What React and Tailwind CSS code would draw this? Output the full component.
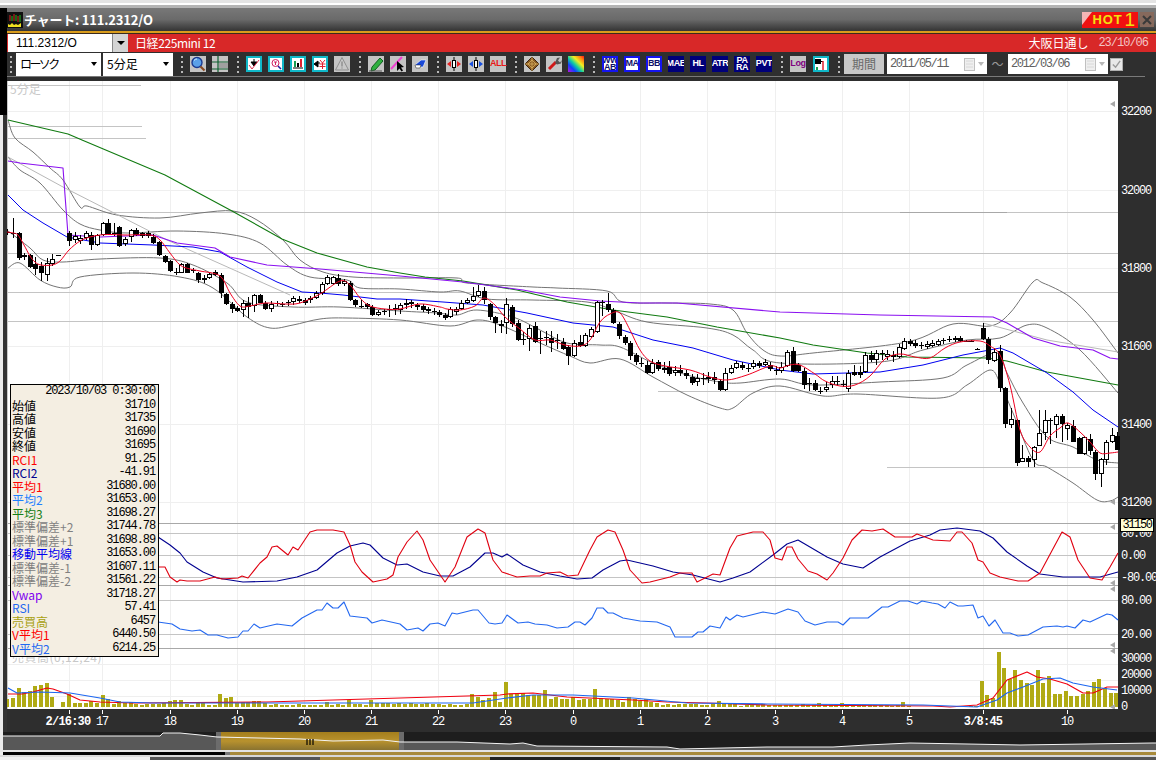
import React from "react";

const pts = (a) => a.map((p) => p.join(",")).join(" ");

const smooth = (a) => {
  let d = `M${a[0][0]} ${a[0][1]}`;
  for (let i = 0; i < a.length - 1; i++) {
    const p0 = a[Math.max(i - 1, 0)];
    const p1 = a[i];
    const p2 = a[i + 1];
    const p3 = a[Math.min(i + 2, a.length - 1)];
    const c1 = [p1[0] + (p2[0] - p0[0]) / 6, p1[1] + (p2[1] - p0[1]) / 6];
    const c2 = [p2[0] - (p3[0] - p1[0]) / 6, p2[1] - (p3[1] - p1[1]) / 6];
    d += `C${c1[0].toFixed(1)} ${c1[1].toFixed(1)} ${c2[0].toFixed(1)} ${c2[1].toFixed(1)} ${p2[0]} ${p2[1]}`;
  }
  return d;
};

const C = [
[7,232,1,229,235],[13,233,1,218,238],[19,233,25,232,260],[24,255,2,253,260],[30,255,12,254,268],[35,264,5,257,275],[41,266,7,262,281],[47,263,12,258,281],[52,259,5,254,266],[58,255,1,255,256],
[69,233,8,231,246],[75,236,4,232,243],[80,238,3,235,244],[86,233,5,231,240],[91,235,10,232,250],[97,235,10,234,246],[103,223,12,222,236],[108,223,11,219,235],[114,233,1,223,236],[119,227,19,226,247],[125,239,5,237,246],[131,230,7,229,242],[136,230,5,228,236],[142,233,3,232,238],[148,233,3,231,238],[153,237,6,234,244],[159,242,13,241,256],[165,256,6,255,263],[170,261,10,260,272],[176,272,1,268,275],[181,264,9,263,273],[187,264,9,263,273],[193,270,1,268,273],[198,273,7,272,283],[204,278,2,275,283],[209,274,4,272,279],[215,272,3,270,276],[221,275,18,273,298],[226,294,10,293,305],[232,304,5,302,313],[237,308,3,306,312],[243,303,7,300,317],[248,303,4,297,318],[254,295,11,294,312],[260,295,8,294,303],[265,303,6,301,310],[271,304,5,301,312],[277,303,1,301,306],[282,304,1,302,307],[288,302,1,300,306],[293,298,4,296,305],[299,299,2,296,303],[305,300,3,298,305],[310,298,2,296,303],[316,293,5,291,299],[322,284,9,282,295],[327,277,7,275,285],[333,277,7,276,285],[338,278,6,274,286],[344,281,3,279,286],[350,283,17,281,301],[355,300,5,299,307],[361,306,1,300,308],[367,304,3,303,309],[372,307,8,305,316],[378,312,3,310,316],[384,311,1,309,315],[389,309,1,305,317],[395,308,1,304,315],[400,305,5,303,314],
[406,303,2,299,309],[411,302,2,300,308],[417,305,2,303,310],[423,306,4,304,312],[428,309,2,307,314],[434,311,1,308,315],[439,312,3,310,317],[445,315,3,313,320],[450,309,8,307,318],[456,309,3,307,315],[461,303,6,300,310],[467,300,3,298,304],[473,296,5,287,302],[478,291,5,285,297],[484,291,9,287,304],[490,304,13,303,320],[495,317,6,316,333],[501,324,2,320,333],[506,304,19,298,334],[512,307,17,305,327],[518,323,17,320,341],[523,339,1,332,345],[529,328,11,325,351],[535,326,16,322,343],[540,338,1,331,354],[546,337,1,331,345],[551,338,5,331,352],[557,340,1,334,349],[563,342,7,338,350],[568,347,9,345,365],[574,343,13,340,357],[580,342,4,335,347],[585,335,11,333,347],[591,329,8,327,338],[597,302,30,301,333],[602,302,1,300,316],[608,304,6,293,312],[613,310,13,308,324],[619,324,12,322,339],[625,337,6,335,345],[630,343,13,341,360],[636,355,7,353,365],[641,363,1,358,367],[647,365,8,361,374],[652,363,10,359,374],[658,362,7,360,371],[664,368,2,362,373],[669,367,7,361,376],[675,370,3,366,376],[680,370,3,365,376],[686,373,3,370,379],[692,377,6,374,385],[697,378,4,374,386],[703,378,1,373,385],[708,377,2,372,383],[714,377,3,372,384],[720,381,9,379,391],[725,373,17,368,391],[731,368,5,365,374],[736,363,5,361,369],[742,365,3,362,370],[748,368,1,364,372],[753,363,4,360,369],[759,363,3,361,368],[765,362,3,359,366],[770,365,4,362,371],[776,370,1,366,375],
[781,367,4,362,373],[787,352,14,350,367],[793,351,20,347,372],[798,365,6,363,372],[804,371,14,368,389],[809,383,1,378,391],[815,383,7,380,391],[820,391,1,387,394],[826,387,3,382,392],[832,381,4,376,388],[837,381,1,376,385],[843,384,1,380,387],[848,373,16,370,392],[854,372,3,365,376],[860,372,3,366,378],[865,355,17,352,373],[871,355,5,351,362],[876,353,7,350,365],[882,353,1,350,360],[887,354,3,350,360],[893,355,2,351,362],[899,347,10,344,358],[904,341,8,338,350],[910,341,3,339,346],[915,343,3,340,348],[921,345,1,342,349],[927,344,3,341,349],[932,343,3,340,347],[938,341,4,339,346],[943,340,1,338,344],[949,339,1,336,342],[955,338,2,336,342],[960,338,3,336,342],[966,341,1,340,342],[971,341,1,340,342],[977,349,1,348,350],[983,328,11,323,340],[988,339,21,337,364],[994,352,9,348,362],[1000,351,37,345,392],[1005,388,36,387,428],[1011,419,6,408,428],[1017,420,43,419,466],[1022,458,4,445,462],[1028,458,4,456,467],[1034,447,13,446,467],[1039,433,13,410,446],[1045,420,13,410,440],[1050,420,1,418,444],[1056,416,9,414,438],[1062,416,8,414,442],[1067,425,4,423,440],[1073,426,16,420,442],[1079,438,16,437,454],[1084,437,17,436,455],[1090,439,12,434,455],[1095,452,22,450,480],[1101,459,15,458,487],[1106,442,18,440,465],[1112,435,7,428,443],[1117,436,14,432,450],
];

const V = [8,9,19,15,16,21,22,24,10,0,5,13,4,4,4,6,4,12,8,3,6,4,5,3,2,3,3,3,4,6,7,7,3,2,4,4,2,2,13,9,10,4,5,5,6,6,4,2,3,2,2,2,3,2,2,2,2,5,2,3,2,7,3,3,2,7,4,4,4,3,4,3,4,3,3,4,3,3,2,3,2,2,3,13,10,7,9,15,5,25,13,13,14,12,12,12,17,8,10,8,8,10,7,8,8,18,9,8,8,7,5,10,8,6,8,5,4,2,3,2,3,3,3,3,2,2,3,6,4,3,3,1,2,2,2,3,2,2,2,2,2,2,3,2,2,4,2,2,2,4,2,2,2,2,2,2,2,2,1,2,5,1,0,0,0,0,0,0,0,0,0,0,1,1,26,12,9,55,39,28,37,27,24,22,37,24,31,13,13,16,11,11,13,16,25,28,19,14,14];

const L = {
ma1:[[7,232],[13,233],[18,235],[24,245],[30,256],[35,262],[41,265],[52,265],[60,261],[69,250],[80,241],[90,237],[100,235],[110,234.5],[125,235],[150,235],[160,240],[170,253],[180,265],[190,269],[200,271],[220,276],[230,293],[240,306],[250,306],[265,303],[285,304],[300,303],[320,294],[340,281],[350,285],[360,298],[370,306],[385,309],[400,309],[420,304],[440,307],[447,309],[460,310],[475,306],[484,298],[495,305],[505,317],[520,329],[535,340],[550,340],[565,345],[580,346],[590,340],[600,322],[610,314],[620,313],[630,330],[640,350],[650,361],[665,366],[690,370],[710,377],[727,380],[747,375],[770,366],[780,368],[790,365],[800,365],[815,374],[825,381],[840,386],[855,385],[870,376],[885,359],[900,354],[915,357],[930,358],[945,348],[960,342],[980,341],[990,346],[1000,355],[1010,385],[1020,430],[1030,447],[1040,452],[1050,436],[1060,428],[1068,423],[1080,432],[1090,442],[1100,453],[1110,453],[1118,452]],
green:[[8,120],[68,134],[82,140],[165,175],[232,211],[282,239],[317,253],[367,267],[400,273],[425,277],[463,281],[517,290],[567,302],[613,310],[667,317],[717,327],[780,338],[813,345],[867,353],[907,357],[987,358],[1007,361],[1047,372],[1118,385]],
purple:[[8,161],[20,163],[63,168],[65,195],[68,235],[100,237],[153,235],[177,243],[215,248],[230,257],[267,265],[320,269],[400,276],[463,282],[523,290],[560,297],[600,301],[640,303],[677,303],[780,312],[880,315],[993,317],[1007,323],[1033,338],[1060,346],[1093,350],[1110,358],[1118,359]],
blue:[[8,195],[23,210],[43,223],[67,237],[100,243],[153,245],[193,247],[220,252],[247,267],[277,282],[302,292],[320,293],[343,295],[377,299],[400,299],[443,302],[483,305],[527,313],[573,323],[613,327],[653,340],[693,348],[733,360],[780,370],[813,374],[847,373],[880,372],[923,365],[963,355],[1000,348],[1013,353],[1047,373],[1073,392],[1093,410],[1118,427]],
up2:[[8,120],[15,138],[33,152],[50,168],[63,180],[80,207],[87,206],[117,215],[160,218],[200,213],[233,211],[257,220],[283,240],[300,260],[323,272],[353,277],[400,278],[457,278],[467,283],[533,287],[557,288],[607,291],[623,302],[667,303],[710,304],[733,310],[747,333],[763,350],[780,356],[813,353],[907,342],[953,324],[990,326],[1010,313],[1033,282],[1043,283],[1070,297],[1093,320],[1118,353]],
up1:[[8,157],[20,170],[40,183],[63,210],[80,224],[100,230],[127,233],[177,231],[227,234],[260,243],[287,265],[310,277],[347,280],[360,288],[400,289],[440,292],[460,291],[487,299],[533,300],[587,302],[613,310],[647,322],[707,328],[733,335],[753,350],[780,363],[880,362],[923,350],[967,340],[1000,338],[1027,325],[1047,328],[1080,350],[1118,393]],
dn1:[[8,231],[30,248],[43,260],[63,262],[100,259],[160,258],[193,265],[227,283],[247,302],[293,307],[340,307],[400,311],[437,313],[457,315],[477,310],[513,317],[540,330],[567,343],[600,345],[620,347],[653,363],[687,375],[720,382],[740,383],[780,379],[813,385],[880,382],[943,378],[967,365],[997,353],[1007,373],[1023,403],[1047,437],[1073,447],[1097,460],[1118,463]],
dn2:[[8,268],[20,263],[40,280],[57,287],[70,287],[80,277],[133,273],[180,277],[213,288],[247,317],[270,328],[293,325],[320,319],[347,318],[400,320],[450,326],[477,320],[500,325],[540,343],[570,356],[590,363],[620,359],[653,377],[687,395],[720,408],[733,408],[753,393],[780,386],[823,396],[857,394],[940,398],[967,385],[990,370],[1000,383],[1013,413],[1033,460],[1047,467],[1073,483],[1097,500],[1110,501],[1118,497]],
light1:[[8,157],[63,187],[167,240],[290,295]],
light2:[[983,323],[1047,340],[1118,352]],
rci1:[[158,567],[165,567],[170,577],[177,582],[180,580],[187,581],[200,581],[215,577],[222,579],[238,578],[242,576],[248,578],[260,563],[267,557],[272,547],[277,546],[288,555],[293,547],[298,550],[310,532],[317,530],[333,530],[344,532],[350,545],[355,562],[362,572],[373,582],[387,579],[393,575],[398,557],[407,542],[417,531],[423,540],[430,560],[445,582],[455,567],[467,537],[478,529],[485,533],[493,560],[502,572],[517,577],[530,576],[540,576],[547,573],[560,572],[568,576],[578,575],[590,550],[597,537],[608,530],[615,532],[623,550],[630,570],[642,583],[650,582],[670,577],[680,573],[692,573],[697,582],[713,574],[720,575],[730,548],[737,536],[753,532],[763,532],[770,540],[775,558],[782,560],[787,547],[792,547],[798,559],[808,571],[817,574],[827,580],[833,573],[843,558],[852,540],[862,530],[872,531],[883,529],[895,537],[912,537],[917,534],[933,540],[950,541],[957,532],[962,532],[972,543],[978,560],[983,562],[990,573],[1000,577],[1018,581],[1028,581],[1040,573],[1062,532],[1070,537],[1078,560],[1090,578],[1102,580],[1110,567],[1118,553]],
rci2:[[158,537],[170,545],[180,553],[187,562],[203,572],[217,578],[243,582],[277,581],[297,577],[317,570],[337,553],[350,546],[363,543],[370,545],[383,558],[397,565],[407,564],[423,572],[440,576],[453,576],[470,567],[485,553],[493,553],[502,557],[507,554],[523,565],[540,572],[560,576],[577,579],[592,578],[603,570],[620,561],[627,560],[653,566],[673,572],[693,575],[720,582],[733,578],[750,572],[773,555],[787,544],[798,540],[827,557],[843,564],[863,568],[880,557],[910,541],[930,535],[940,530],[957,528],[980,531],[993,538],[1007,552],[1027,566],[1040,574],[1063,577],[1100,577],[1118,572]],
rsi:[[158,622],[172,624],[180,629],[192,631],[200,630],[208,635],[217,635],[228,638],[238,637],[243,631],[248,631],[254,624],[260,628],[277,624],[292,626],[302,618],[317,610],[322,610],[327,603],[333,608],[338,608],[344,602],[350,616],[367,618],[372,623],[382,620],[400,624],[407,630],[418,628],[423,631],[430,624],[438,623],[445,626],[452,613],[457,614],[473,610],[478,610],[489,623],[495,624],[502,623],[507,615],[518,623],[528,622],[535,624],[547,625],[557,628],[568,627],[575,622],[580,622],[585,625],[592,618],[597,608],[603,608],[608,613],[613,613],[623,618],[640,621],[657,622],[670,627],[675,637],[692,637],[698,632],[703,632],[710,626],[720,628],[726,617],[730,620],[737,615],[743,617],[763,612],[775,614],[788,609],[798,612],[805,621],[815,625],[827,622],[838,622],[843,625],[850,618],[868,618],[882,607],[888,607],[900,601],[908,601],[917,604],[922,601],[932,603],[938,604],[945,608],[950,602],[958,606],[963,606],[973,605],[978,618],[983,616],[989,626],[995,620],[1003,633],[1010,633],[1018,636],[1028,635],[1043,627],[1057,626],[1063,627],[1067,626],[1075,628],[1083,620],[1090,622],[1107,614],[1112,615],[1118,620]],
vr:[[8,694],[22,694],[33,692],[40,690],[47,688],[53,689],[67,694],[80,700],[100,702],[133,703],[267,702],[500,695],[507,694],[533,693],[567,697],[633,700],[667,702],[707,703],[767,705],[933,706],[950,707],[977,705],[993,698],[1007,680],[1027,672],[1037,677],[1050,679],[1067,684],[1083,693],[1093,693],[1107,687],[1118,687]],
vb:[[8,688],[17,693],[40,692],[70,693],[100,698],[120,702],[153,703],[473,703],[507,698],[533,695],[573,695],[633,698],[687,703],[767,704],[923,705],[977,707],[997,700],[1007,693],[1023,687],[1043,679],[1060,678],[1073,683],[1093,687],[1117,690]],
};

const Poly = ({ d, c, w = 1 }) => <polyline points={pts(d)} fill="none" stroke={c} strokeWidth={w} strokeLinejoin="round" />;
const Curve = ({ d, c, w = 1 }) => <path d={smooth(d)} fill="none" stroke={c} strokeWidth={w} />;

const hoursX = [69,102,170,237,304,371,438,505,573,640,707,775,842,909,983,1067];
const ticks = [["17",102],["18",170],["19",237],["20",304],["21",371],["22",438],["23",505],["0",573],["1",640],["2",707],["3",775],["4",842],["5",909],["10",1067]];

const white = new Set([24,47,52,75,80,86,97,103,125,131,181,204,209,243,254,271,293,310,316,322,327,333,344,378,400,411,450,456,461,467,473,478,501,506,529,574,585,591,597,652,664,675,697,725,731,736,753,765,781,787,826,832,848,865,876,887,899,904,927,932,938,994,1011,1022,1034,1039,1045,1056,1067,1084,1101,1106,1112]);

function Chart() {
  return (
    <svg className="block" width="1149" height="651" viewBox="7 81 1149 651">
      <rect x="7" y="81" width="1111" height="628.5" fill="#ffffff" />
      <rect x="7" y="81" width="1" height="629" fill="#c8c8c8" />
      <g shapeRendering="crispEdges" stroke="#efefef" strokeWidth="1">
        {hoursX.map((x) => <line key={x} x1={x} x2={x} y1="81" y2="709" />)}
        {[111,190,268,346,424,502,664,680,696].map((y) => <line key={y} x1="8" x2="1118" y1={y} y2={y} />)}
      </g>
      <g shapeRendering="crispEdges" stroke="#c4c4c4" strokeWidth="1">
        <line x1="8" x2="141" y1="85" y2="85" />
        <line x1="8" x2="142" y1="126" y2="126" />
        <line x1="8" x2="146" y1="138" y2="138" />
        <line x1="8" x2="1118" y1="212" y2="212" />
        <line x1="8" x2="1118" y1="253" y2="253" />
        <line x1="8" x2="1118" y1="292" y2="292" />
        <line x1="8" x2="1118" y1="321" y2="321" />
        <line x1="658" x2="1118" y1="391" y2="391" />
        <line x1="887" x2="1118" y1="467" y2="467" />
        <line x1="8" x2="1118" y1="533" y2="533" />
        <line x1="8" x2="1118" y1="555" y2="555" />
        <line x1="8" x2="1118" y1="577" y2="577" />
        <line x1="8" x2="1118" y1="600" y2="600" />
        <line x1="8" x2="1118" y1="634" y2="634" />
      </g>
      <g shapeRendering="crispEdges" stroke="#a8a8a8">
        <line x1="900" x2="1007" y1="212" y2="212" />
        <line x1="8" x2="1118" y1="523" y2="523" />
        <line x1="8" x2="1118" y1="585.5" y2="585.5" strokeWidth="1.5" />
        <line x1="8" x2="1118" y1="648" y2="648" />
      </g>
      <text x="10" y="94" className="fill-[#c8c8c8] text-[12px] font-['Noto_Sans_CJK_JP']">5分足</text>
      <text x="12" y="662" className="fill-[#c8c8c8] text-[12px] tracking-[0.5px] font-['Noto_Sans_CJK_JP']">売買高(0,12,24)</text>

      <Curve d={L.up2} c="#747474" />
      <Curve d={L.up1} c="#747474" />
      <Curve d={L.dn1} c="#747474" />
      <Curve d={L.dn2} c="#747474" />
      <Poly d={L.light1} c="#b8b8b8" />
      <Poly d={L.light2} c="#b8b8b8" />
      <Poly d={L.green} c="#107a10" w={1.1} />
      <Poly d={L.blue} c="#0000f0" w={1} />
      <Poly d={L.purple} c="#8a10f0" w={1.1} />

      <g shapeRendering="crispEdges">
        {C.map(([x, t, h, hi, lo], i) => (
          <g key={i}>
            <line x1={x + 0.5} x2={x + 0.5} y1={hi} y2={lo} stroke="#000" />
            {h <= 1 ? (
              <rect x={x - 2} y={t} width="5" height="1" fill="#000" />
            ) : white.has(x) ? (
              <rect x={x - 1.5} y={t + 0.5} width="4" height={h - 1} fill="#fff" stroke="#000" />
            ) : (
              <rect x={x - 2} y={t} width="5" height={h} fill="#000" />
            )}
          </g>
        ))}
      </g>
      <Curve d={L.ma1} c="#f00020" w={1} />

      <Poly d={L.rci2} c="#000090" w={1.1} />
      <Poly d={L.rci1} c="#e00010" w={1.1} />
      <Poly d={L.rsi} c="#2468f0" w={1.1} />

      <g shapeRendering="crispEdges" fill="#b0aa14">
        {V.map((h, i) => h > 0 && <rect key={i} x={Math.round(7.4 + 5.6 * i) - 2} y={707 - h} width="4" height={h} />)}
      </g>
      <Poly d={L.vr} c="#f00010" w={1.2} />
      <Poly d={L.vb} c="#1c66f0" w={1.2} />

      <g fill="#a8a8a8">
        {[104,502,527,583,589,645,651,707].map((y) => <polygon key={y} points={`1110,${y} 1115,${y - 3} 1115,${y + 3}`} />)}
      </g>

      <rect x="7" y="709" width="1149" height="23" fill="#2e2e2e" />
      <g stroke="#ffffff" shapeRendering="crispEdges">
        {hoursX.map((x) => <line key={x} x1={x} x2={x} y1="710" y2="714" />)}
      </g>
      <g className="fill-white text-[12px] tracking-[-1.2px] font-['Liberation_Mono']">
        {[["32200",115],["32000",194],["31800",272],["31600",350],["31400",428],["31200",506],["0.00",559],["-80.00",581],["80.00",604],["20.00",638],["30000",662],["20000",678],["10000",694],["0",710]].map(([s, y]) => (
          <text key={y} x="1121" y={y}>{s}</text>
        ))}
        <text x="1121" y="537">80.00</text>
        {ticks.map(([s, x]) => <text key={x} x={x} y="725" textAnchor="middle">{s}</text>)}
        <text x="68" y="725" textAnchor="middle" className="font-bold tracking-[-0.8px]">2/16:30</text>
        <text x="983" y="725" textAnchor="middle" className="font-bold tracking-[-0.8px]">3/8:45</text>
      </g>
    </svg>
  );
}

const Rows = [
  ["始値", "31710", "text-black"],
  ["高値", "31735", "text-black"],
  ["安値", "31690", "text-black"],
  ["終値", "31695", "text-black"],
  ["RCI1", "91.25", "text-[#ff0000]"],
  ["RCI2", "-41.91", "text-[#000090]"],
  ["平均1", "31680.00", "text-[#ff0000]"],
  ["平均2", "31653.00", "text-[#1e80ff]"],
  ["平均3", "31698.27", "text-[#148014]"],
  ["標準偏差+2", "31744.78", "text-[#808080]"],
  ["標準偏差+1", "31698.89", "text-[#808080]"],
  ["移動平均線", "31653.00", "text-[#0000f0]"],
  ["標準偏差-1", "31607.11", "text-[#808080]"],
  ["標準偏差-2", "31561.22", "text-[#808080]"],
  ["Vwap", "31718.27", "text-[#8000f0]"],
  ["RSI", "57.41", "text-[#2468f0]"],
  ["売買高", "6457", "text-[#a8a010]"],
  ["V平均1", "6440.50", "text-[#ff0000]"],
  ["V平均2", "6214.25", "text-[#2468f0]"],
];

const Num = ({ children }) => (
  <span className="font-['Liberation_Mono'] text-[12px] leading-[13px] tracking-[-1.1px] text-black">{children}</span>
);

function DataPanel() {
  return (
    <div className="absolute left-[3px] top-[303px] w-[149px] h-[273px] bg-[#f4eee2] border-[1.5px] border-black pl-[1px] pr-[3px] font-['Noto_Sans_CJK_JP',sans-serif] text-[12px]">
      <div className="h-[13.500px] flex justify-end items-center"><Num>2023/10/03 0:30:00</Num></div>
      {Rows.map(([k, v, c]) => (
        <div key={k} className="h-[13.500px] flex justify-between items-center">
          <span className={`${c} leading-[13px] whitespace-nowrap`}>{k}</span>
          <Num>{v}</Num>
        </div>
      ))}
    </div>
  );
}

const Grip = () => (
  <div className="w-[3px] h-[17px] flex flex-col justify-between items-center">
    {[0,1,2,3].map((i) => <div key={i} className="w-[2px] h-[2px] bg-[#b8b8b8]" />)}
  </div>
);

const G = ({ children, className = "" }) => (
  <div className={`w-4 h-4 shrink-0 bg-[#c4c4c4] ${className}`}>
    <svg viewBox="0 0 16 16" width="16" height="16" className="block">{children}</svg>
  </div>
);

const TealG = ({ children }) => (
  <div className="w-[16px] h-[16px] shrink-0 border-[2px] border-[#10b8c8] bg-white">
    <svg viewBox="0 0 12 12" width="12" height="12" className="block">{children}</svg>
  </div>
);

const Blue = ({ children, white: w }) => (
  <div className={`w-4 h-4 shrink-0 flex items-center justify-center overflow-hidden text-center font-['Liberation_Sans'] text-[9px] leading-[7.500px] tracking-[-0.4px] whitespace-pre-line ${w ? "bg-white border-2 border-[#1414f0] text-[#10106a] font-bold" : "bg-[#00007a] text-white font-bold"}`}>
    {children}
  </div>
);

const DateBox = ({ v, className = "" }) => (
  <div className={`w-[100px] h-[20px] bg-white flex items-center pl-[3px] pr-[3px] justify-between ${className}`}>
    <span className="font-['Liberation_Mono'] text-[12px] tracking-[-1.4px] text-[#606060]">{v}</span>
    <span className="flex items-center gap-[3px]">
      <svg width="11" height="13" viewBox="0 0 11 13"><rect x=".5" y=".5" width="10" height="12" fill="#efefef" stroke="#c0c0c0" /><path d="M2 3h7M2 6h7M2 9h7" stroke="#d8d8d8" /></svg>
      <span className="border-x-[3.500px] border-t-[4px] border-x-transparent border-t-[#b8b8b8]" />
    </span>
  </div>
);

function Toolbar() {
  return (
    <div className="h-6 shrink-0 bg-[#2f2f2f] flex items-center relative text-black">
      <div className="ml-[2px]"><Grip /></div>
      <div className="ml-[4px] w-[85px] h-[23px] bg-white flex items-center justify-between pl-[4px] pr-[4px] font-['Noto_Sans_CJK_JP'] text-[12px] tracking-[-2.600px]">
        <span>ローソク</span>
        <span className="border-x-[3px] border-t-[4px] border-x-transparent border-t-black" />
      </div>
      <div className="ml-[2px] w-[70px] h-[23px] bg-white flex items-center justify-between pl-[4px] pr-[4px] font-['Noto_Sans_CJK_JP'] text-[12px]">
        <span>5分足</span>
        <span className="border-x-[3px] border-t-[4px] border-x-transparent border-t-black" />
      </div>
      <div className="ml-[7px]"><Grip /></div>
      <div className="ml-[7px] flex items-center gap-[6px]">
        <G><circle cx="7" cy="6.500" r="5" fill="#5aa0e8" stroke="#1a3a90" strokeWidth="1.400" /><path d="M4 4.500a3.500 3.500 0 0 1 3-1.500" stroke="#d8f0ff" fill="none" /><path d="M10.500 10.500l4 4" stroke="#8a4a20" strokeWidth="2.200" /></G>
        <G className="bg-[#707070]"><path d="M0 6h16M6 0v16M0 13h16" stroke="#106030" strokeWidth="1.200" fill="none" /><rect x="7" y="7" width="9" height="5" fill="#a0a0a0" /></G>
      </div>
      <div className="ml-[8px]"><Grip /></div>
      <div className="ml-[7px] flex items-center gap-[6px]">
        <TealG><path d="M6 1v4M3 4h6L6 8z" fill="#000" stroke="#000" /><path d="M1 7l3 4 7-9" stroke="#e03050" fill="none" /></TealG>
        <TealG><circle cx="5.500" cy="5" r="3.500" fill="none" stroke="#d02060" /><path d="M8 8l3 3" stroke="#2020a0" strokeWidth="1.500" /><path d="M4 4h3M5.500 4v3" stroke="#d02060" /></TealG>
        <TealG><path d="M1 10h10" stroke="#000" /><rect x="2" y="3" width="2" height="6" fill="#18a050" /><rect x="5" y="5" width="2" height="4" fill="#000" /><rect x="8" y="1" width="2" height="8" fill="#e02030" /></TealG>
        <TealG><path d="M0 6l4-3v6zM4 5h2" fill="#000" stroke="#000" /><path d="M6 2l2.500 3L11 2M5.500 6h6M5.500 8.500h6M8.500 5v6" stroke="#e02030" fill="none" /></TealG>
        <G><path d="M8 1.500L14.500 14h-13z" fill="#c8c8c8" stroke="#8f8f8f" /><path d="M8 5.500v5M8 11.500v1" stroke="#909090" strokeWidth="1.500" /></G>
      </div>
      <div className="ml-[8px]"><Grip /></div>
      <div className="ml-[7px] flex items-center gap-[6px]">
        <G><path d="M4 11L12 2l3 3-8 9-4 1z" fill="#30b040" stroke="#106020" /><path d="M1 15h13" stroke="#555" /></G>
        <G><path d="M1 13L12 1" stroke="#f040d0" strokeWidth="2" /><path d="M7 5v10l2.500-2.500 2 3 1.500-1-2-3 3-.5z" fill="#000" /></G>
        <G><path d="M3 9l6-5h5l-3 7H5z" fill="#1848d8" stroke="#fff" strokeWidth=".6" /><path d="M3 9h6l-1 3H4z" fill="#fff" stroke="#222" strokeWidth=".5" /></G>
      </div>
      <div className="ml-[8px]"><Grip /></div>
      <div className="ml-[7px] flex items-center gap-[6px]">
        <G><rect x="6.500" y="4.500" width="3" height="7" fill="#fff" stroke="#000" /><path d="M8 1v3.500M8 11.500V15" stroke="#000" /><path d="M1 8l4-3v6zM15 8l-4-3v6z" fill="#e82020" /></G>
        <G><rect x="6.500" y="4.500" width="3" height="7" fill="#fff" stroke="#000" /><path d="M8 1v3.500M8 11.500V15" stroke="#000" /><path d="M1 8l4-3v6zM15 8l-4-3v6z" fill="#1850e0" /></G>
        <div className="w-4 h-4 shrink-0 bg-[#c4c4c4] flex items-center justify-center font-['Liberation_Sans'] text-[9px] font-bold text-[#e81818] tracking-[-0.500px]">ALL</div>
      </div>
      <div className="ml-[8px]"><Grip /></div>
      <div className="ml-[7px] flex items-center gap-[6px]">
        <G><path d="M8 1l7 7-7 7-7-7z" fill="#8a5a20" stroke="#3a2410" /><path d="M4 8l4-4 4 4-4 4zM1 8h14M8 1v14" stroke="#d8b060" fill="none" strokeWidth=".8" /></G>
        <G><path d="M3 13l7-7" stroke="#d01818" strokeWidth="3" /><path d="M9 7l2-5 3-.5-2 3 2 2 2-2.500-1 3.500-4 1z" fill="#555" /></G>
        <svg width="16" height="16" viewBox="0 0 16 16" className="block shrink-0">
          <defs><linearGradient id="rb" x1="0" y1="1" x2="1" y2="0"><stop offset="0" stopColor="#c010e0" /><stop offset=".25" stopColor="#1040ff" /><stop offset=".45" stopColor="#10d0a0" /><stop offset=".65" stopColor="#f0f020" /><stop offset=".85" stopColor="#ff8010" /><stop offset="1" stopColor="#ff1010" /></linearGradient></defs>
          <rect width="16" height="16" fill="url(#rb)" />
        </svg>
      </div>
      <div className="ml-[8px]"><Grip /></div>
      <div className="ml-[7px] flex items-center gap-[6px]">
        <Blue white>{"WW\nAB"}</Blue>
        <Blue white>MA</Blue>
        <Blue white>BB</Blue>
        <Blue>MAE</Blue>
        <Blue>HL</Blue>
        <Blue>ATR</Blue>
        <Blue>{"PA\nRA"}</Blue>
        <Blue>PVT</Blue>
      </div>
      <div className="ml-[8px]"><Grip /></div>
      <div className="ml-[7px] flex items-center gap-[7px]">
        <div className="w-4 h-4 shrink-0 bg-[#c4c4c4] flex items-center justify-center font-['Liberation_Sans'] text-[9px] font-bold text-[#800080] tracking-[-0.400px]">Log</div>
        <TealG><rect x="0" y="1" width="6" height="5" fill="#000" /><path d="M6 3.500h2" stroke="#000" /><rect x="1" y="9" width="2" height="3" fill="#18a050" /><path d="M8 3v9" stroke="#e02030" strokeWidth="1.500" /></TealG>
      </div>
      <div className="ml-[8px]"><Grip /></div>
      <div className="ml-[4px] w-10 h-[20px] bg-[#c8c8c8] flex items-center justify-center font-['Noto_Sans_CJK_JP'] text-[12px] text-[#6a6a6a]">期間</div>
      <DateBox v="2011/05/11" className="ml-[3px]" />
      <span className="w-[21px] text-center text-[#9a9a9a] text-[12px] font-['Noto_Sans_CJK_JP']">〜</span>
      <DateBox v="2012/03/06" />
      <div className="ml-[2px] w-[13px] h-[13px] bg-[#e8e8e8] border border-[#b0b0b0] flex items-center justify-center">
        <svg viewBox="0 0 12 12" width="11" height="11"><path d="M2 6l3 3 5-7" stroke="#9a9a9a" strokeWidth="1.500" fill="none" /></svg>
      </div>
    </div>
  );
}

function Overview() {
  const line = [[3,736],[160,736],[163,733],[180,733],[200,735],[217,737],[300,739],[333,741],[383,740],[400,742],[457,742],[510,744],[523,743],[537,746],[667,747],[680,749],[767,747],[833,747],[867,745],[910,743],[967,744],[1020,745],[1152,743],[1156,743]];
  return (
    <svg className="block" width="1153" height="18" viewBox="3 732 1153 18">
      <defs>
        <linearGradient id="au" x1="0" y1="0" x2="0" y2="1">
          <stop offset="0" stopColor="#a47e1c" /><stop offset=".5" stopColor="#b8922e" /><stop offset="1" stopColor="#8a7330" />
        </linearGradient>
      </defs>
      <rect x="3" y="732" width="1153" height="18" fill="#1e1e1e" />
      <polygon points={`${pts(line)} 1156,750 3,750`} fill="#585858" />
      <rect x="221" y="732" width="178" height="18" fill="url(#au)" />
      <rect x="216" y="732" width="5" height="18" fill="#6c6c6c" />
      <rect x="399" y="732" width="5" height="18" fill="#6c6c6c" />
      <polyline points={pts(line)} fill="none" stroke="#f4f4f4" strokeWidth="1" />
      <path d="M307 739v6M310 739v6M313 739v6" stroke="#2a2008" strokeWidth="1.500" />
    </svg>
  );
}

export default function App() {
  return (
    <div className="w-[1156px] h-[760px] overflow-hidden flex flex-col bg-[#2e2e2e] font-['Noto_Sans_CJK_JP',sans-serif]">
      <div className="h-[8px] shrink-0 flex flex-col bg-white">
        <div className="h-[3px] bg-[#e4e4e4]" />
        <div className="h-[2px] bg-white" />
        <div className="h-[3px] bg-[#b4b4b4]" />
      </div>

      <div className="h-[724px] shrink-0 flex">
        <div className="w-[7px] shrink-0 flex flex-col">
          <div className="h-[107px] bg-black" />
          <div className="flex-1 flex">
            <div className="w-[3px] bg-[#ececec]" />
            <div className="flex-1 bg-[#333333]" />
          </div>
        </div>

        <div className="w-[1149px] flex flex-col">
          <div className="h-[23px] shrink-0 bg-gradient-to-b from-[#787878] via-[#6a6a6a] to-[#343434] flex items-center justify-between pr-[2px]">
            <div className="flex items-center">
              <svg width="16" height="16" viewBox="0 0 16 16" className="block">
                <rect width="16" height="16" fill="#101010" />
                <path d="M3 3v6M7 2v7M11 4v6" stroke="#e02020" />
                <path d="M5 4v5M9 3v6M13 3v7" stroke="#20c020" />
                <path d="M1 15V12l2 1 2-2 2 2 2-1 2 1 3-2v4z" fill="#f0e020" />
              </svg>
              <span className="ml-[1px] text-white text-[13px] font-bold tracking-[-0.200px]">チャート: 111.2312/O</span>
            </div>
            <div className="flex items-center gap-[2px]">
              <div className="relative w-[56px] h-[16px] bg-[#f01010] overflow-hidden flex items-center justify-end pr-[3px] font-['Liberation_Sans'] font-bold text-[#f0e010] text-[13px] leading-none">
                <span className="absolute left-0 top-0 border-t-[13px] border-r-[10px] border-t-[#f5b5b5] border-r-transparent" />
                <span className="tracking-[0.800px]">HOT</span>
                <span className="text-[19px] font-normal ml-[2px]">1</span>
              </div>
              <div className="w-[14px] h-[15px] bg-[#86695c] flex items-center justify-center">
                <svg viewBox="0 0 12 12" width="12" height="12"><path d="M2 2l8 8M10 2l-8 8" stroke="#3a3a3a" strokeWidth="2" /></svg>
              </div>
            </div>
          </div>
          <div className="h-[2px] shrink-0 bg-[#d99c1c]" />
          <div className="h-px shrink-0 bg-[#3a2a1c]" />

          <div className="h-[18px] shrink-0 bg-[#d82828] flex items-center text-white">
            <div className="ml-px w-[104px] h-full bg-white text-black flex items-center pl-[8px] font-['Liberation_Sans'] text-[12px]">111.2312/O</div>
            <div className="w-[16px] h-full bg-[#d4d4d4] flex items-center justify-center border-l border-[#888]">
              <span className="border-x-[4px] border-t-[4px] border-x-transparent border-t-black" />
            </div>
            <span className="ml-[7px] text-[12px] tracking-[-0.400px]">日経225mini 12</span>
            <span className="ml-auto text-[12px]">大阪日通し</span>
            <span className="ml-[10px] mr-[8px] font-['Liberation_Mono'] text-[12px] tracking-[-1px] text-[#f4c4c4]">23/10/06</span>
          </div>

          <Toolbar />
          <div className="h-px shrink-0 w-[1138px] bg-[#7a7a7a]" />
          <div className="h-[4px] shrink-0" />

          <div className="relative h-[651px] shrink-0">
            <Chart />
            <DataPanel />
            <div className="absolute left-[1113px] top-[437px] w-[34px] h-[14px] bg-[#ffffd8] border border-black flex items-center justify-center font-['Liberation_Mono'] text-[12px] tracking-[-1.400px] text-black">31150</div>
          </div>
        </div>
      </div>

      <div className="h-[18px] shrink-0 flex bg-[#ececec] pl-[3px]">
        <Overview />
      </div>

      <div className="h-[10px] shrink-0 flex flex-col">
        <div className="h-[2px] bg-[#e4e4e4]" />
        <div className="h-[3px] flex">
          <div className="w-[3px] bg-[#ececec]" />
          <div className="w-[222px] bg-black" />
          <div className="w-[5px] bg-[#777777]" />
          <div className="flex-1 bg-[#a88a3a]" />
        </div>
        <div className="h-[2px] bg-[#d8d8d8]" />
        <div className="h-[3px] flex bg-[#555555]">
          <div className="w-[150px] bg-[#eeeeee]" />
          <div className="w-[170px] bg-[#555555]" />
          <div className="w-[170px] bg-[#a88a3a]" />
          <div className="w-[130px] bg-[#222222]" />
        </div>
      </div>
    </div>
  );
}
